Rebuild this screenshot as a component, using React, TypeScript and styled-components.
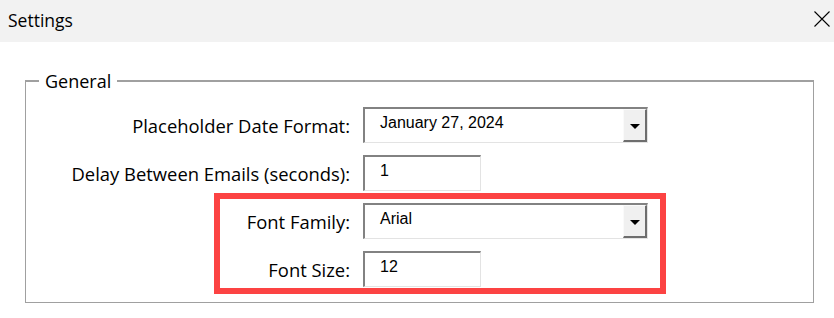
import React from 'react'
import styled, { createGlobalStyle } from 'styled-components'

const GlobalStyle = createGlobalStyle`
  html, body {
    margin: 0;
    padding: 0;
    background: #ffffff;
  }
  body {
    font-family: 'Noto Sans', 'Open Sans', sans-serif;
    color: #000;
  }
`

const Window = styled.div`
  width: 834px;
  height: 318px;
  background: #ffffff;
  display: flex;
  flex-direction: column;
  overflow: hidden;
`

const TitleBar = styled.div`
  height: 42px;
  flex: none;
  background: #f2f2f2;
  display: flex;
  align-items: center;
  justify-content: space-between;
  padding: 0 3px 0 8px;
  box-sizing: border-box;
`

const Title = styled.span`
  font-family: 'Open Sans', 'Noto Sans', sans-serif;
  font-size: 17.5px;
  color: #000;
  margin-top: -3px;
`

const CloseButton = styled.button`
  background: transparent;
  border: none;
  padding: 0;
  width: 18px;
  height: 18px;
  display: flex;
  align-items: center;
  justify-content: center;
  margin-top: -4px;
  cursor: pointer;
`

const Body = styled.div`
  padding: 28px 20px 0 25px;
`

const Group = styled.fieldset`
  margin: 0;
  padding: 15px 0 15px 0;
  border: 1px solid #a0a0a0;
  border-top-width: 2px;
  min-width: 0;
`

const Legend = styled.legend`
  margin-left: 13px;
  padding: 0 6px;
  font-family: 'Open Sans', 'Noto Sans', sans-serif;
  font-size: 18px;
  line-height: 22px;
  color: #000;
`

const FormGrid = styled.div`
  position: relative;
  display: grid;
  grid-template-columns: 324px 1fr;
  grid-auto-rows: 36px;
  column-gap: 13px;
  row-gap: 12px;
`

const Label = styled.label`
  justify-self: end;
  align-self: center;
  font-family: 'Open Sans', 'Noto Sans', sans-serif;
  font-size: 18.4px;
  color: #000;
  white-space: nowrap;
`

const Field = styled.div<{ $width: number }>`
  width: ${p => p.$width}px;
  height: 36px;
  box-sizing: border-box;
  display: flex;
  align-items: stretch;
  background: #fff;
  border-top: 2px solid #828282;
  border-left: 2px solid #828282;
  border-right: 1px solid #e3e3e3;
  border-bottom: 1px solid #e3e3e3;
`

const Value = styled.span`
  flex: 1;
  padding: 4px 0 0 15px;
  font-family: 'Liberation Sans', Arial, sans-serif;
  font-size: 16px;
  line-height: 20px;
  color: #000;
  white-space: nowrap;
`

const DropButton = styled.div`
  width: 24px;
  flex: none;
  box-sizing: border-box;
  background: #f0f0f0;
  border-top: 1px solid #fafafa;
  border-left: 1px solid #fafafa;
  border-right: 2px solid #6e6e6e;
  border-bottom: 2px solid #6e6e6e;
  display: flex;
  align-items: center;
  justify-content: center;
`

const Arrow = styled.span`
  width: 0;
  height: 0;
  border-left: 5px solid transparent;
  border-right: 5px solid transparent;
  border-top: 5px solid #000;
  margin-top: 2px;
`

const Highlight = styled.div`
  position: absolute;
  left: 188px;
  top: 86px;
  width: 452px;
  height: 101px;
  box-sizing: border-box;
  border: 6px solid #fc4343;
  pointer-events: none;
`

const Combo: React.FC<{ value: string }> = ({ value }) => (
  <Field $width={285}>
    <Value>{value}</Value>
    <DropButton>
      <Arrow />
    </DropButton>
  </Field>
)

const TextInput: React.FC<{ value: string }> = ({ value }) => (
  <Field $width={118}>
    <Value>{value}</Value>
  </Field>
)

export default function App() {
  return (
    <Window>
      <GlobalStyle />
      <TitleBar>
        <Title>Settings</Title>
        <CloseButton aria-label="Close">
          <svg width="16" height="16" viewBox="0 0 16 16">
            <path d="M0.5 0.5 L15.5 15.5 M15.5 0.5 L0.5 15.5" stroke="#000" strokeWidth="1.1" fill="none" />
          </svg>
        </CloseButton>
      </TitleBar>
      <Body>
        <Group>
          <Legend>General</Legend>
          <FormGrid>
            <Label>Placeholder Date Format:</Label>
            <Combo value="January 27, 2024" />
            <Label>Delay Between Emails (seconds):</Label>
            <TextInput value="1" />
            <Label>Font Family:</Label>
            <Combo value="Arial" />
            <Label>Font Size:</Label>
            <TextInput value="12" />
            <Highlight />
          </FormGrid>
        </Group>
      </Body>
    </Window>
  )
}
